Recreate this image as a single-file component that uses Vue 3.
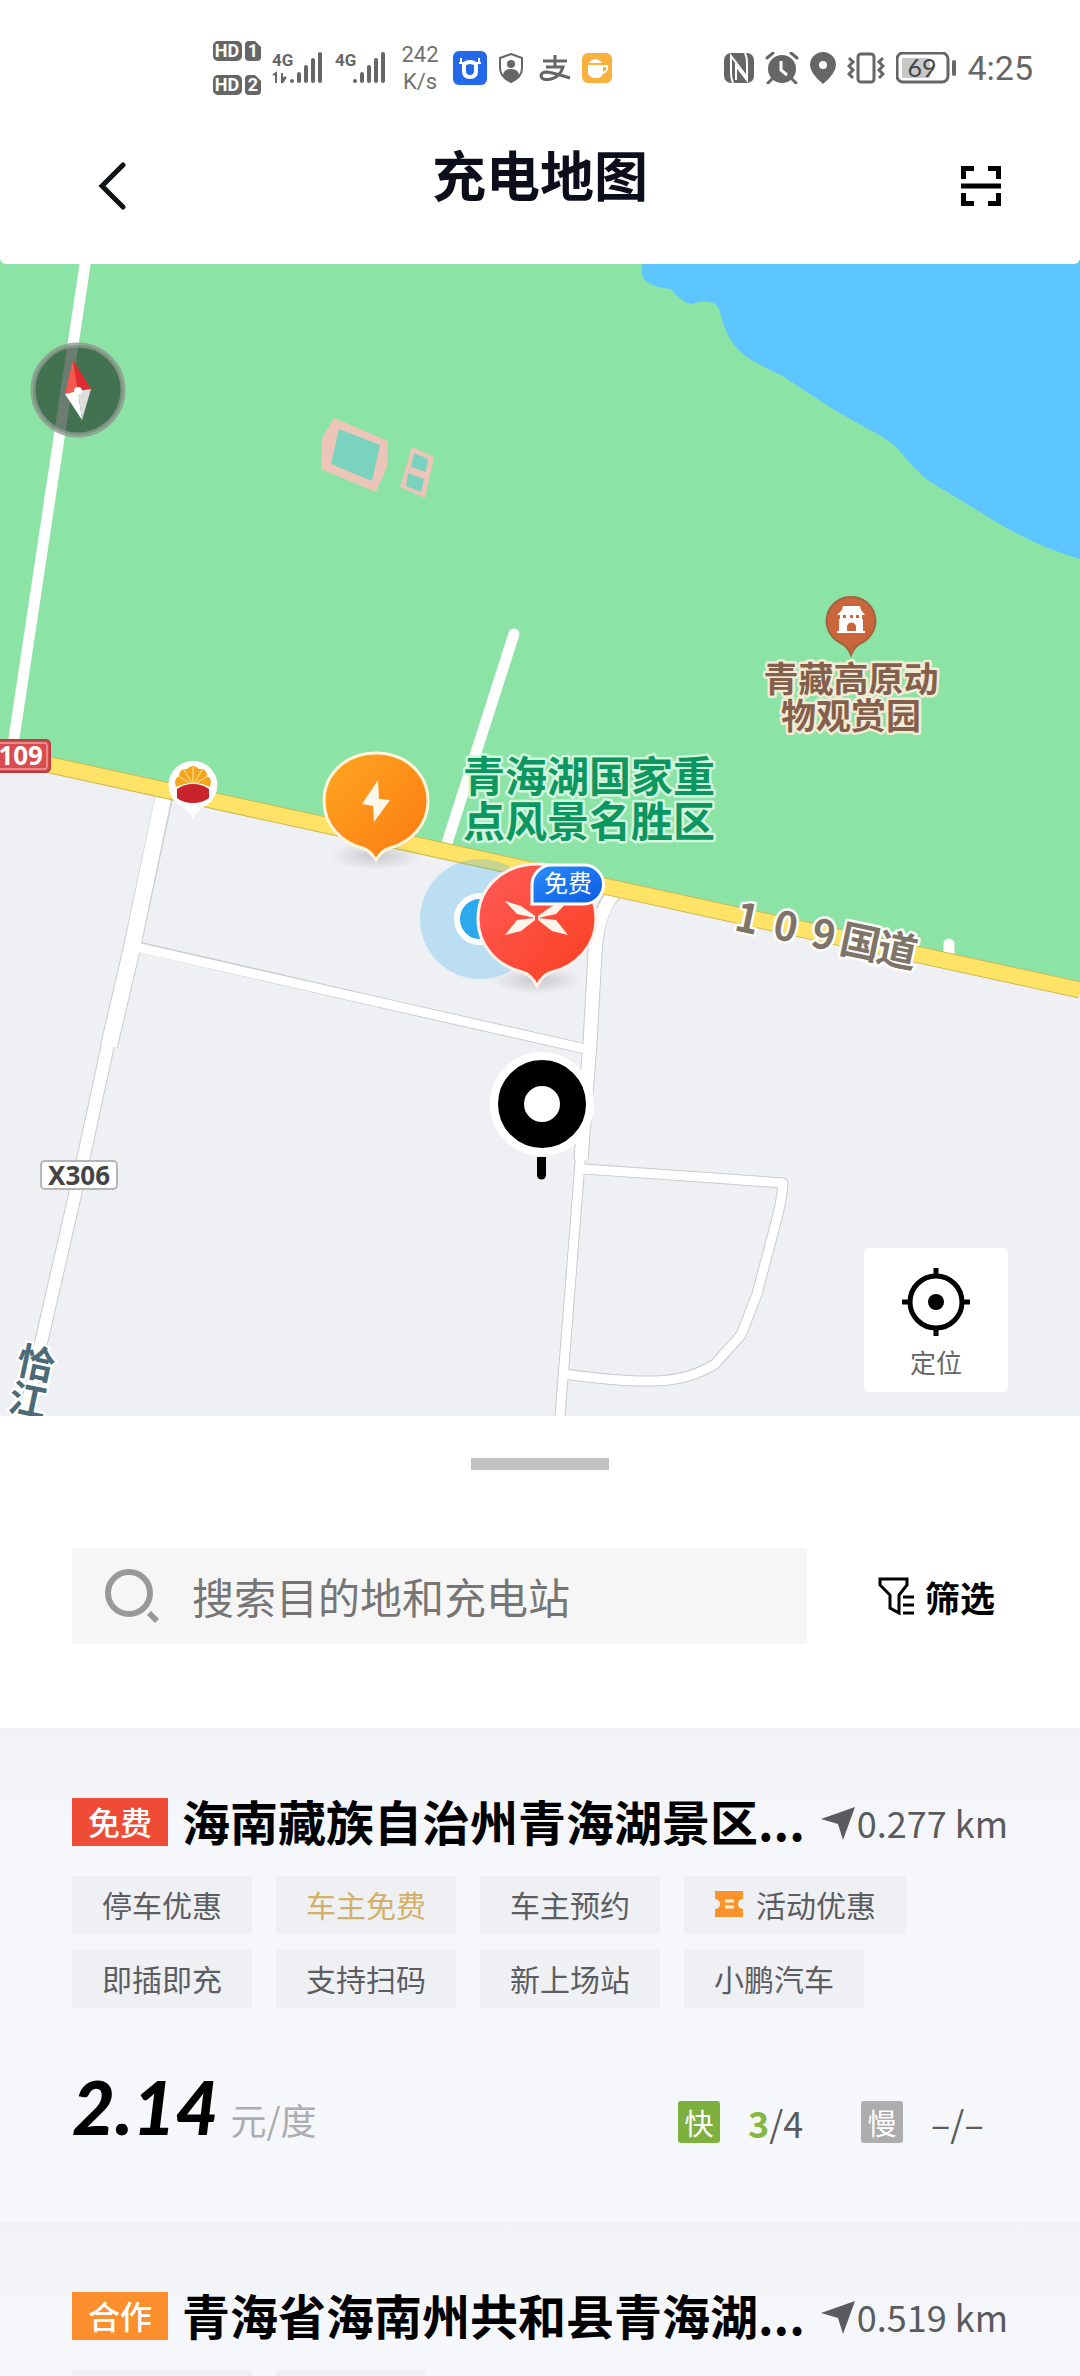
<script setup>
import { ref } from 'vue'

const keyword = ref('')

const stations = [
  {
    id: 1,
    badge: '免费',
    tone: 'free',
    name: '海南藏族自治州青海湖景区...',
    distance: '0.277 km',
    tags: [
      { text: '停车优惠' },
      { text: '车主免费', gold: true },
      { text: '车主预约' },
      { text: '活动优惠', ticket: true },
      { text: '即插即充' },
      { text: '支持扫码' },
      { text: '新上场站' },
      { text: '小鹏汽车' }
    ],
    price: '2.14',
    fast: { free: '3', total: '/4' },
    slow: '–/–'
  },
  {
    id: 2,
    badge: '合作',
    tone: 'partner',
    name: '青海省海南州共和县青海湖...',
    distance: '0.519 km',
    tags: [{ text: '', size: 'wide' }, { text: '', size: 'narrow' }]
  }
]
</script>

<template>
  <div class="screen">
    <header class="top">
      <div class="status">
        <div class="status-left">
          <svg class="ico" width="48" height="54" viewBox="0 0 48 54">
            <g fill="#666">
              <rect x="0" y="0" width="29" height="20" rx="5" />
              <path d="M37 0h6l6 6v10q0 4-4 4h-8q-4 0-4-4V4q0-4 4-4z" transform="translate(-1 0)" />
              <rect x="0" y="34" width="29" height="20" rx="5" />
              <path d="M37 0h6l6 6v10q0 4-4 4h-8q-4 0-4-4V4q0-4 4-4z" transform="translate(-1 34)" />
            </g>
            <g class="mini" fill="#fff" text-anchor="middle">
              <text x="14" y="16">HD</text><text x="40" y="16">1</text>
              <text x="14" y="50">HD</text><text x="40" y="50">2</text>
            </g>
          </svg>
          <svg class="ico sig-one" width="52" height="32" viewBox="0 0 52 32">
            <text class="net" x="0" y="14">4G</text>
            <path d="M1 23l3-2v10M10 21v10M10 31l4-6M10 27l4-2" stroke="#666" stroke-width="2" fill="none" />
            <g stroke="#666" stroke-width="4" stroke-linecap="round">
              <path d="M20 29v0M27 22v7M34 15v14M41 8v21M48 2v27" />
            </g>
          </svg>
          <svg class="ico sig-two" width="52" height="32" viewBox="0 0 52 32">
            <text class="net" x="0" y="14">4G</text>
            <g stroke="#666" stroke-width="4" stroke-linecap="round">
              <path d="M20 29v0M27 22v7M34 15v14M41 8v21M48 2v27" />
            </g>
          </svg>
          <div class="speed"><span>242</span><span>K/s</span></div>
          <svg class="ico" width="34" height="34" viewBox="0 0 34 34">
            <rect width="34" height="34" rx="6" fill="#2469ea" />
            <path d="M11 13v7q0 6 6 6t6-6v-7q-6-4-12 0z" fill="none" stroke="#fff" stroke-width="4" />
            <path d="M8 7v5h5M26 7v5h-5M6 12h6M28 12h-6" fill="none" stroke="#fff" stroke-width="2" />
          </svg>
          <svg class="ico shield" width="26" height="32" viewBox="0 0 26 32">
            <path d="M13 2l11 4v10q0 9-11 14Q2 25 2 16V6z" fill="none" stroke="#666" stroke-width="2" />
            <circle cx="13" cy="12" r="4" fill="#666" />
            <path d="M5 24q0-7 8-7t8 7q-3 4-8 6-5-2-8-6z" fill="#666" />
          </svg>
          <svg class="ico pay" width="32" height="28" viewBox="0 0 32 28">
            <g fill="none" stroke="#666" stroke-width="3">
              <path d="M4 7h24M16 1v12M7 13h17q-3 10-12 12-9 2-10-3 0-4 6-4 7 1 23 6" />
            </g>
          </svg>
          <svg class="ico cup" width="30" height="30" viewBox="0 0 30 30">
            <rect width="30" height="30" rx="6" fill="#f8b13c" />
            <path d="M6 12h15v8q0 5-7 5t-8-5z" fill="#fff" />
            <path d="M21 13h4q1 6-5 7" fill="none" stroke="#fff" stroke-width="2" />
            <path d="M7 10q6-8 13 0z" fill="#fff" />
          </svg>
        </div>
        <div class="status-right">
          <svg class="ico" width="30" height="30" viewBox="0 0 30 30">
            <rect width="30" height="30" rx="7" fill="#666" />
            <path d="M9 30Q7 26 7 20V3l16 21M21 0q2 4 2 10v17L12 13v14" fill="none" stroke="#fff" stroke-width="2" />
          </svg>
          <svg class="ico" width="34" height="32" viewBox="0 0 34 32">
            <circle cx="17" cy="17" r="14" fill="#666" />
            <path d="M2 6l6-5M32 6l-6-5M7 27l-4 4M27 27l4 4" stroke="#666" stroke-width="3" stroke-linecap="round" />
            <path d="M16 9v9l6 5" fill="none" stroke="#fff" stroke-width="3" />
          </svg>
          <svg class="ico" width="26" height="32" viewBox="0 0 26 32">
            <path fill-rule="evenodd" d="M13 0a13 13 0 0 1 13 13q0 8-13 19Q0 21 0 13A13 13 0 0 1 13 0zm0 9a4 4 0 1 0 0 8 4 4 0 0 0 0-8z" fill="#666" />
          </svg>
          <svg class="ico" width="38" height="32" viewBox="0 0 38 32">
            <rect x="11" y="2" width="16" height="28" rx="3" fill="none" stroke="#666" stroke-width="3" />
            <path d="M2 6l4 4-4 4 4 4-4 4 4 4M36 6l-4 4 4 4-4 4 4 4-4 4" fill="none" stroke="#666" stroke-width="3" />
          </svg>
          <svg class="ico" width="60" height="32" viewBox="0 0 60 32">
            <rect x="1" y="1" width="51" height="29" rx="6" fill="#fff" stroke="#666" stroke-width="3" />
            <rect x="6" y="6" width="28" height="20" rx="1" fill="#c8c8c8" />
            <rect x="56" y="8" width="4" height="16" rx="2" fill="#666" />
            <text class="cell" x="26" y="25" text-anchor="middle">69</text>
          </svg>
          <time class="clock">4:25</time>
        </div>
      </div>
      <nav class="nav">
        <button class="icon-btn" type="button" aria-label="返回">
          <svg width="30" height="50" viewBox="0 0 30 50"><path d="M27 4L6 25l21 21" fill="none" stroke="#111417" stroke-width="5" stroke-linecap="round" /></svg>
        </button>
        <h1>充电地图</h1>
        <button class="icon-btn" type="button" aria-label="扫码">
          <svg width="40" height="40" viewBox="0 0 40 40">
            <path d="M13 2.5H2.5V13M27 2.5h10.500V13M13 37.500H2.500V27M27 37.500h10.500V27M0 20h40" fill="none" stroke="#000" stroke-width="5" />
          </svg>
        </button>
      </nav>
    </header>

    <section class="map" aria-label="地图">
      <svg class="canvas" viewBox="0 258 1080 1158">
        <defs>
          <linearGradient id="orange" x1="0" y1="0" x2="1" y2="1">
            <stop offset="0" stop-color="#ffa722" /><stop offset="1" stop-color="#fb7a10" />
          </linearGradient>
          <linearGradient id="red" x1="0" y1="0" x2="1" y2="1">
            <stop offset="0" stop-color="#ff5b58" /><stop offset="1" stop-color="#fb3f20" />
          </linearGradient>
          <linearGradient id="blue" x1="0" y1="0" x2="1" y2="1">
            <stop offset="0" stop-color="#2b8dfb" /><stop offset="1" stop-color="#0a5be2" />
          </linearGradient>
          <radialGradient id="shade">
            <stop offset="0" stop-color="#000" stop-opacity=".16" /><stop offset="1" stop-color="#000" stop-opacity="0" />
          </radialGradient>
        </defs>

        <rect y="258" width="1080" height="1158" fill="#eef0f4" />
        <path d="M0 258H1080V990L0 754z" fill="#8ce3a6" />
        <path d="M644 258Q640 270 643 277Q646 286 671 289Q684 304 692 304Q716 296 720 312Q727 345 750 359Q765 368 781 375L836 411L881 436Q890 441 898 449Q915 470 929 481L977 510Q1032 546 1080 559V258z" fill="#5dc5ff" />

        <g fill="#ecc5b8">
          <path d="M334 418l54 23-1 26-11 25-55-23 1-31z" />
          <path d="M412 447l22 10-9 41-25-11z" />
        </g>
        <path d="M339 429l41 16-8 36-41-17zM414 453l14 6-2 13-15-5zM408 473l16 6-3 13-15-6z" fill="#79d3bf" />

        <g fill="none" stroke="#c9cbcf" stroke-linejoin="round">
          <path d="M164 797L131 952L109 1046" stroke-width="18" />
          <path d="M109 1040L83 1160L41 1343L25 1416" stroke-width="14" />
          <path d="M139 947L400 1007L590 1050M585 1169L700 1177L783 1183Q782 1200 776 1222L757 1294L741 1335L715 1364Q690 1380 655 1381Q620 1382 566 1374" stroke-width="11" />
          <path d="M616 893Q598 905 595 953L590 1043L581 1160" stroke-width="15" />
          <path d="M581 1150L560 1416" stroke-width="11" />
        </g>
        <g fill="none" stroke="#fff" stroke-linejoin="round">
          <path d="M164 794L131 952L109 1046" stroke-width="16" />
          <path d="M109 1040L83 1160L41 1343L25 1416" stroke-width="12" />
          <path d="M136 947L400 1007L590 1050M583 1169L700 1177L783 1183Q782 1200 776 1222L757 1294L741 1335L715 1364Q690 1380 655 1381Q620 1382 564 1374" stroke-width="9" />
          <path d="M620 888Q598 905 595 953L590 1043L581 1160" stroke-width="13" />
          <path d="M581 1150L560 1416" stroke-width="9" />
          <path d="M86 258L13 745M447 843L514 634" stroke-width="11" />
          <path d="M949 944v10M514 634v0" stroke-width="11" stroke-linecap="round" />
        </g>
        <path d="M0 754L1080 990" stroke="#cdb94f" stroke-width="17" />
        <path d="M0 754L1080 990" stroke="#ffe366" stroke-width="15" />

        <circle cx="78" cy="390" r="45" fill="#1c3524" fill-opacity=".65" stroke="#8d9a90" stroke-opacity=".8" stroke-width="5" />
        <path d="M73 360L65 394L78 391z" fill="#fa5650" /><path d="M73 360L91 389L78 391z" fill="#e02a2f" />
        <path d="M65 394L78 391L82 420z" fill="#fff" /><path d="M91 389L78 391L82 420z" fill="#dedede" />
        <circle cx="78" cy="391" r="4" fill="#fff" />

        <rect x="-20" y="740" width="70" height="32" rx="4" fill="#d94b4e" stroke="#b93f42" stroke-width="2" />
        <rect x="-20" y="743" width="67" height="26" rx="2" fill="none" stroke="#f5c9c9" />
        <text class="road" x="43" y="765" text-anchor="end" fill="#fff">109</text>
        <rect x="41" y="1161" width="76" height="28" rx="4" fill="#fff" stroke="#b5b5b5" stroke-width="2" />
        <text class="road" x="79" y="1185" text-anchor="middle" fill="#444">X306</text>

        <g>
          <path d="M193 761a24 24 0 0 1 10 46q-7 4-10 12-3-8-10-12a24 24 0 0 1 10-46z" fill="#fff" />
          <path d="M176 787q-3-8 3-11 1-8 8-7 6-6 12 0 8-1 8 7 6 3 3 11-17-8-34 0z" fill="#f5a51c" />
          <path d="M193 785V767M193 785l-9-15M193 785l9-15M193 785l-15-9M193 785l15-9" stroke="#ffe7a8" />
          <path d="M177 789q7-5 16-5t16 5v9q-6 5-16 5t-16-5z" fill="#c9232b" />
        </g>

        <ellipse cx="376" cy="856" rx="46" ry="14" fill="url(#shade)" />
        <path d="M376 753C406 753 428 774 428 801C428 825 411 842 390 848Q382 850 376 860Q370 850 362 848C341 842 324 825 324 801C324 774 346 753 376 753z" fill="url(#orange)" stroke="#fff6dc" stroke-width="3" />
        <path d="M378 780L362 804L373 806L374 822L390 800L379 799z" fill="#fff6ea" />

        <circle cx="480" cy="919" r="60" fill="#4ab5ee" fill-opacity=".3" />
        <circle cx="480" cy="919" r="23" fill="#2ba9ef" stroke="#fff" stroke-width="6" />
        <ellipse cx="537" cy="980" rx="46" ry="14" fill="url(#shade)" />
        <path d="M537 864C571 864 596 888 596 919C596 946 576 966 552 972Q543 974 537 986Q531 974 522 972C498 966 478 946 478 919C478 888 503 864 537 864z" fill="url(#red)" stroke="#fff1e8" stroke-width="3" />
        <g fill="#fff4ea">
          <path d="M505 901L521 906L535 916V918L517 914z" />
          <path d="M505 935L517 920L535 918V920L521 931z" />
          <path d="M568 901L552 906L538 916V918L556 914z" />
          <path d="M568 935L556 920L538 918V920L552 931z" />
        </g>
        <path d="M552 865H584a19 19 0 0 1 0 39H532V885a20 20 0 0 1 20-20z" fill="url(#blue)" stroke="#fff" stroke-width="3" />
        <text class="free" x="568" y="892" text-anchor="middle">免费</text>

        <circle cx="542" cy="1104" r="52" fill="#fff" />
        <circle cx="542" cy="1104" r="31" fill="#fff" stroke="#000" stroke-width="26" />
        <path d="M537 1157h9v18a4 4 0 0 1-9 0z" />

        <g class="scenic" text-anchor="middle">
          <text x="589" y="792">青海湖国家重</text>
          <text x="589" y="837">点风景名胜区</text>
        </g>
        <path d="M851 597a24 24 0 0 1 12 45q-9 4-12 13-3-9-12-13a24 24 0 0 1 12-45z" fill="#cb663c" stroke="#a2643c" stroke-width="2" />
        <path fill-rule="evenodd" d="M843 606h17l1 4 4 5h-3v4h1v12h2v2H837v-2h2v-12h1v-4h-3l5-5zM843 615v3h3v-3zM850 615v3h3v-3zM856 615v3h3v-3zM847 631h9v-4a4 4 0 0 0-9 0z" fill="#fff" />
        <g class="zoo" text-anchor="middle">
          <text x="851" y="692">青藏高原动</text>
          <text x="851" y="729">物观赏园</text>
        </g>
        <text class="highway" transform="translate(733 930) rotate(12)" x="0 39 78 107 145">109国道</text>
        <g class="village" text-anchor="middle">
          <text transform="translate(33 1377) rotate(12)">恰</text>
          <text transform="translate(25 1414) rotate(12)">江</text>
        </g>
      </svg>
      <button class="locate" type="button">
        <svg width="68" height="68" viewBox="0 0 68 68">
          <circle cx="34" cy="34" r="26" fill="none" stroke="#000" stroke-width="5" />
          <circle cx="34" cy="34" r="8" />
          <path d="M34 0v8M34 60v8M0 34h8M60 34h8" stroke="#000" stroke-width="5" />
        </svg>
        <span>定位</span>
      </button>
    </section>

    <section class="sheet">
      <div class="handle"></div>
      <form class="search-row" @submit.prevent>
        <label class="search">
          <svg width="56" height="56" viewBox="0 0 56 56" aria-hidden="true">
            <circle cx="25" cy="25" r="21" fill="none" stroke="#999" stroke-width="6" />
            <path d="M45 45l8 8" stroke="#999" stroke-width="6" />
          </svg>
          <input v-model="keyword" type="text" aria-label="搜索" placeholder="搜索目的地和充电站" />
        </label>
        <button class="filter" type="button">
          <svg width="38" height="40" viewBox="0 0 38 40">
            <path d="M3 3h27v6l-8 10v18l-9-5V19L3 9z" fill="none" stroke="#000" stroke-width="3" />
            <path d="M26 21h11M26 29h11M26 37h11" stroke="#000" stroke-width="3" />
          </svg>
          筛选
        </button>
      </form>
    </section>

    <main class="list">
      <article v-for="s in stations" :key="s.id" class="card">
        <div class="head">
          <span class="badge" :class="s.tone">{{ s.badge }}</span>
          <h2>{{ s.name }}</h2>
          <span class="distance">
            <svg width="34" height="34" viewBox="0 0 34 34"><path d="M34 0L22 33l-5-16L0 12z" fill="#5a5b5d" /></svg>
            {{ s.distance }}
          </span>
        </div>
        <div class="tags">
          <span v-for="(t, i) in s.tags" :key="i" class="tag" :class="[{ gold: t.gold }, t.size]">
            <svg v-if="t.ticket" width="30" height="26" viewBox="0 0 30 26">
              <path d="M1 0h28v8a5 5 0 0 0 0 10v8H1v-8a5 5 0 0 0 0-10z" fill="#f9922a" />
              <path d="M11 10h9M11 16h9" stroke="#fff0d8" stroke-width="3" />
            </svg>
            {{ t.text }}
          </span>
        </div>
        <div v-if="s.price" class="foot">
          <p class="price"><strong>{{ s.price }}</strong><span>元/度</span></p>
          <div class="ports">
            <span class="kind fast">快</span>
            <span class="count"><b>{{ s.fast.free }}</b>{{ s.fast.total }}</span>
            <span class="kind slow">慢</span>
            <span class="count">{{ s.slow }}</span>
          </div>
        </div>
      </article>
    </main>
  </div>
</template>

<style>
body {
  margin: 0;
  background: #f6f7fb;
}
</style>

<style scoped>
.screen {
  display: flex;
  flex-direction: column;
  height: 100vh;
  overflow: hidden;
  font-family: "Noto Sans CJK SC", sans-serif;
  color: #000;
}
svg {
  display: block;
  flex: none;
}
button {
  margin: 0;
  padding: 0;
  border: 0;
  background: none;
  font: inherit;
  color: inherit;
}
.top {
  position: relative;
  z-index: 1;
  flex: none;
  background: #fff;
  border-radius: 0 0 6px 6px;
}
.status {
  display: flex;
  justify-content: space-between;
  align-items: center;
  height: 136px;
  padding: 0 47px 0 213px;
}
.status-left,
.status-right {
  display: flex;
  align-items: center;
  gap: 11px;
}
.mini {
  font: 700 18px Roboto, sans-serif;
}
.net {
  font: 700 17px Roboto, sans-serif;
  fill: #666;
}
.cell {
  font: 400 25px Lato, sans-serif;
  fill: #444;
}
.speed {
  display: flex;
  flex-direction: column;
  width: 44px;
  text-align: center;
  font: 400 22px/27px Roboto, sans-serif;
  color: #707070;
}
.pay {
  margin-left: 4px;
}
.clock {
  font: 400 34px/40px Roboto, sans-serif;
  color: #666;
}
.nav {
  display: flex;
  justify-content: space-between;
  align-items: center;
  height: 100px;
  padding: 0 79px 28px;
}
.icon-btn {
  display: flex;
  justify-content: flex-end;
  width: 47px;
}
.nav h1 {
  margin: 0;
  padding-bottom: 24px;
  font-size: 54px;
  line-height: 80px;
  font-weight: 700;
  color: #0c0e1c;
}
.map {
  position: relative;
  flex: none;
  margin-top: -6px;
}
.canvas {
  width: 100%;
  height: auto;
}
.road {
  font: 700 26px "Noto Sans", sans-serif;
}
.free {
  font-size: 24px;
  fill: #fff;
}
.scenic,
.zoo,
.highway,
.village {
  font-weight: 700;
  paint-order: stroke;
  stroke-width: 5px;
  stroke-linejoin: round;
}
.scenic {
  font-size: 42px;
  fill: #0c9660;
  stroke: #d3f6de;
}
.zoo {
  font-size: 35px;
  fill: #84604c;
  stroke: #f2ecd6;
}
.highway {
  font-size: 40px;
  fill: #7e7468;
  stroke: #fff;
}
.village {
  font-size: 38px;
  fill: #4b6b78;
  stroke: #fff;
}
.locate {
  position: absolute;
  right: 72px;
  bottom: 24px;
  display: flex;
  flex-direction: column;
  align-items: center;
  gap: 6px;
  width: 144px;
  height: 144px;
  padding-top: 20px;
  border-radius: 6px;
  background: #fff;
  font-size: 26px;
  line-height: 40px;
  color: #666;
}
.sheet {
  flex: none;
  padding: 42px 72px 84px;
  background: #fff;
}
.handle {
  width: 138px;
  height: 12px;
  margin: 0 auto 78px;
  background: #c3c3c3;
}
.search-row {
  display: flex;
  align-items: center;
  gap: 70px;
}
.search {
  display: flex;
  flex: 1;
  align-items: center;
  gap: 32px;
  min-width: 0;
  height: 96px;
  padding: 0 32px;
  background: #f6f6f6;
}
.search input {
  flex: 1;
  min-width: 0;
  padding: 0;
  border: 0;
  outline: 0;
  background: none;
  font: inherit;
  font-size: 42px;
  line-height: 60px;
}
.search input::placeholder {
  color: #767676;
  opacity: 1;
}
.filter {
  display: flex;
  align-items: center;
  gap: 10px;
  width: 131px;
  font-size: 35px;
  font-weight: 700;
  white-space: nowrap;
}
.list {
  flex: 1;
  min-height: 0;
  overflow: hidden;
  background: #f6f7fb;
}
.card {
  padding: 66px 72px 70px;
  background: linear-gradient(#f0f2f6 0, #f6f7fb 110px);
}
.head {
  display: flex;
  align-items: center;
  height: 56px;
}
.badge {
  flex: none;
  width: 96px;
  height: 48px;
  margin-right: 14px;
  font-size: 32px;
  line-height: 46px;
  font-weight: 500;
  text-align: center;
  color: #fff;
}
.badge.free {
  background: #ef4c38;
}
.badge.partner {
  background: #fb8f2e;
}
.head h2 {
  flex: 1;
  min-width: 0;
  margin: 0;
  padding-bottom: 4px;
  overflow: hidden;
  white-space: nowrap;
  font-size: 48px;
  line-height: 60px;
  font-weight: 700;
}
.distance {
  display: flex;
  align-items: center;
  gap: 2px;
  font-size: 36px;
  white-space: nowrap;
  color: #5a5b5d;
}
.distance svg {
  margin-top: 4px;
}
.tags {
  display: flex;
  flex-wrap: wrap;
  gap: 16px 24px;
  margin-top: 26px;
}
.tag {
  display: flex;
  align-items: center;
  gap: 12px;
  box-sizing: border-box;
  height: 58px;
  padding: 0 30px 2px;
  background: #eff0f4;
  font-size: 30px;
  color: #5c5d60;
}
.tag.gold {
  color: #d3b06a;
}
.tag.wide {
  width: 180px;
}
.tag.narrow {
  width: 150px;
}
.foot {
  display: flex;
  justify-content: space-between;
  align-items: center;
  height: 80px;
  margin-top: 64px;
}
.price {
  margin: 0;
  padding-top: 10px;
  line-height: 80px;
}
.price strong {
  font: italic 900 74px/80px Lato, sans-serif;
}
.price span {
  margin-left: 12px;
  font-size: 36px;
  color: #adadb0;
}
.ports {
  display: flex;
  align-items: center;
  padding-top: 20px;
}
.kind {
  width: 42px;
  height: 42px;
  margin-right: 28px;
  border-radius: 3px;
  font-size: 29px;
  line-height: 42px;
  text-align: center;
  color: #fff;
}
.kind.fast {
  background: #7db03f;
}
.kind.slow {
  background: #adadad;
}
.count {
  width: 113px;
  font-size: 36px;
  line-height: 40px;
  color: #5a5b5d;
}
.count:last-child {
  width: 77px;
}
.count b {
  color: #86b740;
}
</style>
